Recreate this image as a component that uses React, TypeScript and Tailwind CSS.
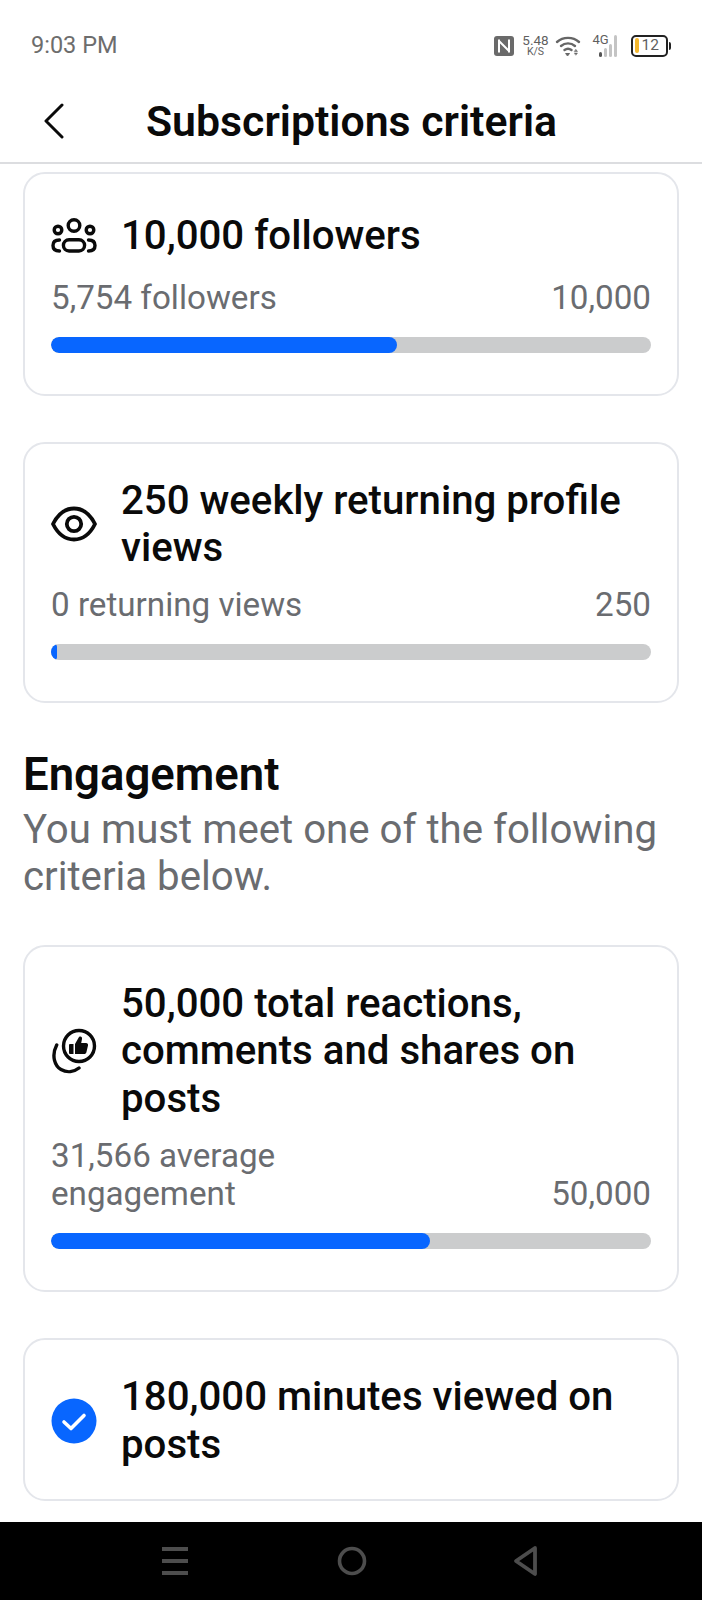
import React, { FC, ReactNode } from 'react';

const FollowersIcon = () => (
  <svg width="46" height="35" viewBox="0 0 46 35" fill="none" stroke="#0a0a0a" strokeWidth="3.4" strokeLinecap="round">
    <circle cx="23" cy="7.5" r="5.8" />
    <circle cx="7" cy="12" r="3.8" />
    <circle cx="39" cy="12" r="3.8" />
    <rect x="12.4" y="21.7" width="21.2" height="11.3" rx="5.65" />
    <path d="M8.5 22 C3.8 22 2 24.5 2 27.5 C2 30.5 3.8 33 8.5 33" />
    <path d="M37.5 22 C42.2 22 44 24.5 44 27.5 C44 30.5 42.2 33 37.5 33" />
  </svg>
);

const EyeIcon = () => (
  <svg width="46" height="36" viewBox="0 0 46 36" fill="none" stroke="#0a0a0a" strokeWidth="3.8" strokeLinejoin="round">
    <path d="M2 18 C7 8 14 2.5 23 2.5 C32 2.5 39 8 44 18 C39 28 32 33.5 23 33.5 C14 33.5 7 28 2 18 Z" />
    <circle cx="23" cy="18" r="7.2" />
  </svg>
);

const EngagementIcon = () => (
  <svg width="46" height="46" viewBox="0 0 46 46" fill="none">
    <circle cx="28" cy="18" r="15.5" stroke="#0a0a0a" strokeWidth="3.4" />
    <path d="M5.7 17 C0 28 4 38 10 41.5 C16 45 23 44 28 40" stroke="#0a0a0a" strokeWidth="3.4" strokeLinecap="round" />
    <path
      d="M19 16 h3.5 v10 h-3.5 a1 1 0 0 1 -1 -1 v-8 a1 1 0 0 1 1 -1 Z M24 16 L28 9 c1.8 -1.2 3.4 0 3 2 l-0.8 4 h4.8 c1.5 0 2.3 1.2 2 2.6 l-1.6 6.6 c-0.3 1.2 -1.1 1.8 -2.2 1.8 h-9.2 Z"
      fill="#0a0a0a"
    />
  </svg>
);

const CheckIcon = () => (
  <svg width="46" height="46" viewBox="0 0 46 46">
    <circle cx="23" cy="23" r="22.5" fill="#0866ff" />
    <path d="M13 24 L20 30.5 L33 17.5" fill="none" stroke="#ffffff" strokeWidth="3.6" strokeLinecap="round" strokeLinejoin="round" />
  </svg>
);

const StatusIcons = () => (
  <div className="flex items-center text-[#5f5f5f]">
    <svg width="20" height="20" viewBox="0 0 20 20" className="mr-[9px]">
      <rect width="20" height="20" rx="3" fill="#6a6a6a" />
      <path d="M5 3.5 V16.5 M15 3.5 V16.5 M5 5 L15 15" stroke="#ffffff" strokeWidth="2" fill="none" />
    </svg>
    <div className="mr-[6px] flex w-[26px] flex-col items-center leading-none">
      <span className="text-[13.5px] leading-[13px]">5.48</span>
      <span className="text-[10.5px] leading-[10px]">K/S</span>
    </div>
    <svg width="26" height="22" viewBox="0 0 26 22" fill="none" stroke="#666666" strokeWidth="2.4" strokeLinecap="round" className="mr-[12px]">
      <path d="M2 7 C8 1.5 18 1.5 24 7" />
      <path d="M6 11 C10 7.5 16 7.5 20 11" />
      <path d="M9.5 15 C11.5 13.5 14.5 13.5 16.5 15" />
      <path d="M11 18.5 h3.5 l-1.75 2.2 Z" fill="#666666" strokeWidth="1" />
      <path d="M21 14.5 l1.5 2 h-3 Z M19.5 18 h3 l-1.5 2 Z" fill="#666666" strokeWidth="0.5" />
    </svg>
    <div className="relative mr-[10px] h-[28px] w-[28px]">
      <span className="absolute left-0 top-0 text-[13px] leading-[16px]">4G</span>
      <div className="absolute bottom-[3px] left-[6px] flex items-end gap-[2px]">
        <span className="h-[5px] w-[3px] rounded-sm bg-[#555555]" />
        <span className="h-[9px] w-[3px] rounded-sm bg-[#c4c4c4]" />
        <span className="h-[13px] w-[3px] rounded-sm bg-[#c4c4c4]" />
        <span className="h-[22px] w-[3px] rounded-sm bg-[#c4c4c4]" />
      </div>
    </div>
    <div className="flex items-center">
      <div className="flex h-[22px] w-[37px] items-center rounded-[5px] border-2 border-[#222222] px-[2px]">
        <span className="h-[15px] w-[4px] rounded-sm bg-[#f5b82e]" />
        <span className="ml-[3px] text-[15.5px] leading-none">12</span>
      </div>
      <span className="ml-[1px] h-[8px] w-[2.5px] rounded-r-sm bg-[#222222]" />
    </div>
  </div>
);

interface CardProps {
  icon: ReactNode;
  title: ReactNode;
  current?: ReactNode;
  goal?: string;
  percent?: number;
  className?: string;
  statClass?: string;
}

const CriteriaCard: FC<CardProps> = ({ icon, title, current, goal, percent, className, statClass }) => (
  <div className={`rounded-[22px] border-2 border-[#e4e6eb] px-[26px] ${className ?? ''}`}>
    <div className="flex items-center gap-[24px]">
      <div className="flex w-[46px] shrink-0 justify-center">{icon}</div>
      <div className="text-[40.2px] font-medium leading-[47.5px] text-[#0a0a0a]">{title}</div>
    </div>
    {percent !== undefined && (
      <>
        <div className={`flex items-end justify-between text-[33.2px] leading-[38px] text-[#6a6c70] ${statClass ?? ''}`}>
          <div>{current}</div>
          <div>{goal}</div>
        </div>
        <div className="mt-[20px] h-[16px] w-full overflow-hidden rounded-full bg-[#cbcccd]">
          <div className="h-full rounded-full bg-[#0866ff]" style={{ width: `${percent}%` }} />
        </div>
      </>
    )}
  </div>
);

export default function App() {
  return (
    <div className="flex h-[1600px] w-[702px] flex-col overflow-hidden bg-white font-['Roboto',sans-serif]">
      <div className="flex h-[90px] items-center justify-between pl-[31px] pr-[31px] pt-[1px]">
        <span className="text-[23.5px] text-[#6d6d6d]">9:03 PM</span>
        <StatusIcons />
      </div>
      <div className="flex h-[74px] items-center border-b-2 border-[#dcdde0] pb-[10px]">
        <svg width="24" height="36" viewBox="0 0 24 36" fill="none" stroke="#0a0a0a" strokeWidth="3" strokeLinecap="round" strokeLinejoin="round" className="ml-[42px]">
          <path d="M20 2 L4 18 L20 34" />
        </svg>
        <h1 className="ml-[80px] text-[42.8px] font-semibold text-[#0a0a0a]">Subscriptions criteria</h1>
      </div>
      <div className="flex-1 px-[23px] pt-[8px]">
        <CriteriaCard
          icon={<FollowersIcon />}
          title="10,000 followers"
          current="5,754 followers"
          goal="10,000"
          percent={57.6}
          statClass="mt-[19px]"
          className="pb-[41px] pt-[38px]"
        />
        <CriteriaCard
          icon={<EyeIcon />}
          title="250 weekly returning profile views"
          current="0 returning views"
          goal="250"
          percent={1}
          statClass="mt-[14px]"
          className="mt-[46px] pb-[41px] pt-[33px]"
        />
        <h2 className="mt-[47px] text-[45.5px] font-semibold leading-[50px] text-[#0a0a0a]">Engagement</h2>
        <p className="mt-[6px] text-[40.2px] leading-[47.5px] text-[#6a6c70]">You must meet one of the following criteria below.</p>
        <CriteriaCard
          icon={<EngagementIcon />}
          title="50,000 total reactions, comments and shares on posts"
          current={<>31,566 average<br />engagement</>}
          goal="50,000"
          percent={63.2}
          statClass="mt-[15px]"
          className="mt-[44px] pb-[41px] pt-[33px]"
        />
        <CriteriaCard
          icon={<CheckIcon />}
          title="180,000 minutes viewed on posts"
          className="mt-[46px] pb-[31px] pt-[33px]"
        />
      </div>
      <div className="flex h-[78px] items-center bg-black">
        <div className="ml-[162px] flex w-[26px] flex-col gap-[8px]">
          <span className="h-[4px] bg-[#4d4d4d]" />
          <span className="h-[4px] bg-[#4d4d4d]" />
          <span className="h-[4px] bg-[#4d4d4d]" />
        </div>
        <svg width="30" height="30" viewBox="0 0 30 30" fill="none" stroke="#4d4d4d" strokeWidth="3.6" className="ml-[149px]">
          <circle cx="15" cy="15" r="12.5" />
        </svg>
        <svg width="26" height="32" viewBox="0 0 26 32" fill="none" stroke="#4d4d4d" strokeWidth="3.8" strokeLinejoin="round" className="ml-[146px]">
          <path d="M22 3 L3 16 L22 29 Z" />
        </svg>
      </div>
    </div>
  );
}
